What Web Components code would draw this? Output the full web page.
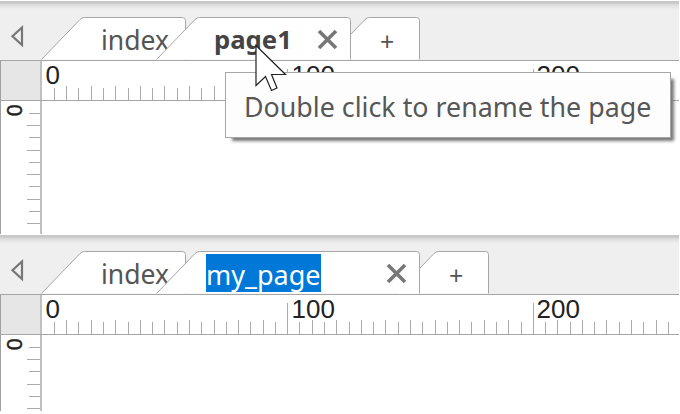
<!DOCTYPE html>
<html lang="en">
<head>
<meta charset="utf-8">
<title>Page tabs</title>
<style>
    body {
        margin: 0;
        width: 680px;
        height: 414px;
        overflow: hidden;
        position: relative;
        background: #fff;
        font-family: "Noto Sans", "Open Sans", sans-serif;
        color: #555;
    }

    hint-bubble {
        position: absolute;
        left: 225px;
        top: 72px;
    }

    mouse-pointer {
        position: absolute;
        left: 254px;
        top: 43px;
    }
</style>
</head>
<body>
<editor-pane height="234">
    <page-tab slot="tabs" width="145">index</page-tab>
    <page-tab slot="tabs" width="195" active closable>page1</page-tab>
    <page-tab slot="tabs" width="94" add>+</page-tab>
</editor-pane>
<editor-pane height="177">
    <page-tab slot="tabs" width="145">index</page-tab>
    <page-tab slot="tabs" width="264" editing closable>my_page</page-tab>
    <page-tab slot="tabs" width="94" add>+</page-tab>
</editor-pane>
<hint-bubble>Double click to rename the page</hint-bubble>
<mouse-pointer></mouse-pointer>

<script>
class PageTab extends HTMLElement {
    constructor() {
        super();
        this.shadowDOM = this.attachShadow({mode: "open"});
    }

    connectedCallback() {
        this.render();
    }

    render() {
        const w = Number(this.getAttribute("width"));
        const shape = `M0.5 42.5 L39 2.5 Q41 .5 43.5 .5 H${w - 3.5} Q${w - 0.5} .5 ${w - 0.5} 3.5 V42.5`;
        this.shadowDOM.innerHTML = `
            <style>
                :host {
                    display: grid;
                    flex: none;
                    width: ${w}px;
                    height: 43px;
                    margin-right: -30px;
                    font-size: 26.5px;
                    z-index: 1;
                }
                :host([active]), :host([editing]) {
                    z-index: 2;
                    margin-right: -25px;
                }
                :host([active]) {
                    font-size: 25.7px;
                }
                :host([editing]) {
                    font-size: 27px;
                }
                /* the add tab is tucked behind its neighbour */
                :host([add]) {
                    font-size: 25px;
                    z-index: 0;
                }
                svg, .content {
                    grid-area: 1 / 1;
                }
                .content {
                    display: flex;
                    align-items: center;
                    padding: 3px 13px 0 60px;
                    box-sizing: border-box;
                    height: 43px;
                }
                .label {
                    flex: 1;
                    white-space: nowrap;
                    line-height: 38px;
                }
                .label span {
                    display: inline-block;
                }
                :host([active]) .content {
                    padding-left: 58px;
                }
                :host([active]) .label {
                    font-weight: bold;
                    color: #444;
                }
                :host([editing]) .content {
                    padding: 2px 13px 0 50px;
                }
                :host([editing]) .label span {
                    box-sizing: border-box;
                    width: 115px;
                    height: 38px;
                    padding-top: 3px;
                    margin-top: -1px;
                    line-height: 36px;
                    vertical-align: top;
                    background: #0078d7;
                    color: #fff;
                }
                :host([add]) .content {
                    padding-left: 54px;
                    padding-top: 4px;
                }
                .close {
                    flex: none;
                    width: 21px;
                    height: 21px;
                    margin-top: -1px;
                }
            </style>
            <svg width="${w}" height="43"><path d="${shape}" fill="#fff" stroke="#a6a6a6"/></svg>
            <div class="content">
                <div class="label"><span><slot></slot></span></div>
                ${this.hasAttribute("closable") ? `
                <svg class="close" viewBox="0 0 21 21"><path d="M2 2 L19 19 M19 2 L2 19" stroke="#777" stroke-width="3.6" fill="none"/></svg>` : ""}
            </div>
        `;
    }
}

class RulerScale extends HTMLElement {
    constructor() {
        super();
        this.shadowDOM = this.attachShadow({mode: "open"});
    }

    connectedCallback() {
        this.render();
    }

    // twenty divisions for every hundred units
    ticks(vertical, length) {
        const step = vertical ? 12.2 : 12.28;
        const start = vertical ? 0.4 : 0.1;
        let marks = "";
        for (let i = 1; start + i * step < length; i++) {
            const p = Math.floor(start + i * step);
            const size = i % 20 === 0 ? 32 : (i % 2 ? 13 : 15);
            marks += vertical
                ? `<rect x="${41 - size}" y="${p}" width="${size}" height="1"/>`
                : `<rect x="${p}" y="${40 - size}" width="1" height="${size}"/>`;
        }
        return marks;
    }

    render() {
        const vertical = this.hasAttribute("vertical");
        const length = Number(this.getAttribute("length"));
        const labels = vertical ? [] : [[0, 3.5], [100, 249.5], [200, 494.5]];
        this.shadowDOM.innerHTML = `
            <style>
                :host {
                    display: block;
                    overflow: hidden;
                    font-family: "Liberation Sans", Arial, sans-serif;
                }
                svg {
                    display: block;
                }
            </style>
            <svg width="${vertical ? 41 : length}" height="${vertical ? length : 40}">
                <g fill="#aaa">${this.ticks(vertical, length)}</g>
                <g fill="#222" font-size="26">
                    ${labels.map(([n, x]) => `<text x="${x}" y="22.5">${n}</text>`).join("")}
                    ${vertical ? `<text transform="translate(20.6 15.3) rotate(-90)" font-size="21.5" stroke="#222" stroke-width=".4">0</text>` : ""}
                </g>
            </svg>
        `;
    }
}

class EditorPane extends HTMLElement {
    constructor() {
        super();
        this.shadowDOM = this.attachShadow({mode: "open"});
    }

    connectedCallback() {
        this.render();
    }

    render() {
        const height = Number(this.getAttribute("height"));
        this.shadowDOM.innerHTML = `
            <style>
                :host {
                    display: flex;
                    flex-direction: column;
                    width: 679px;
                    height: ${height}px;
                    overflow: hidden;
                }
                .bar {
                    flex: none;
                    display: flex;
                    align-items: flex-end;
                    box-sizing: border-box;
                    height: 61px;
                    border-top: 1px solid #fff;
                    border-bottom: 1px solid #a6a6a6;
                    background: linear-gradient(#c6c6c6 0, #c9c9c9 2px, #dedede 4px, #eee 8px, #efefef 9px);
                }
                .arrow {
                    flex: none;
                    width: 41px;
                    height: 43px;
                }
                .ruler {
                    flex: none;
                    display: flex;
                    height: 39px;
                    border-bottom: 1px solid #a6a6a6;
                }
                .corner {
                    width: 40px;
                    box-sizing: border-box;
                    border-left: 1px solid #a0a0a0;
                    background: #e6e6e6;
                }
                .ruler ruler-scale {
                    border-left: 2px solid #c0c0c0;
                }
                .body {
                    flex: 1;
                    display: flex;
                    min-height: 0;
                }
                .side {
                    width: 39px;
                    border-left: 1px solid #a0a0a0;
                    border-right: 2px solid #c0c0c0;
                }
            </style>
            <div class="bar">
                <svg class="arrow" viewBox="0 0 41 43"><path d="M22 10.5 V28 L12.5 19.3 Z" fill="none" stroke="#777" stroke-width="2.2"/></svg>
                <slot name="tabs"></slot>
            </div>
            <div class="ruler">
                <div class="corner"></div>
                <ruler-scale length="637"></ruler-scale>
            </div>
            <div class="body">
                <ruler-scale class="side" vertical length="${height - 101}"></ruler-scale>
            </div>
        `;
    }
}

class HintBubble extends HTMLElement {
    constructor() {
        super();
        this.shadowDOM = this.attachShadow({mode: "open"});
        this.shadowDOM.innerHTML = `
            <style>
                :host {
                    display: block;
                    box-sizing: border-box;
                    width: 446px;
                    height: 66px;
                    padding-left: 18px;
                    border: 1px solid #a6a6a6;
                    background: #fdfdfd;
                    box-shadow: 5px 5px 3px -2px #777;
                    font-size: 26.8px;
                    line-height: 67px;
                    white-space: nowrap;
                    color: #575757;
                    z-index: 5;
                }
            </style>
            <slot></slot>
        `;
    }
}

class MousePointer extends HTMLElement {
    constructor() {
        super();
        this.shadowDOM = this.attachShadow({mode: "open"});
        this.shadowDOM.innerHTML = `
            <style>
                :host {
                    display: block;
                    z-index: 6;
                }
                svg {
                    display: block;
                }
            </style>
            <svg width="34" height="50" viewBox="0 0 34 50">
                <path d="M2 2.5 V42.5 L11.5 33.5 L17.5 47.5 L23 45 L17.5 31.5 H31.5 Z" fill="#fff" stroke="#222" stroke-width="1.2"/>
            </svg>
        `;
    }
}

customElements.define("page-tab", PageTab);
customElements.define("ruler-scale", RulerScale);
customElements.define("editor-pane", EditorPane);
customElements.define("hint-bubble", HintBubble);
customElements.define("mouse-pointer", MousePointer);
</script>
</body>
</html>
